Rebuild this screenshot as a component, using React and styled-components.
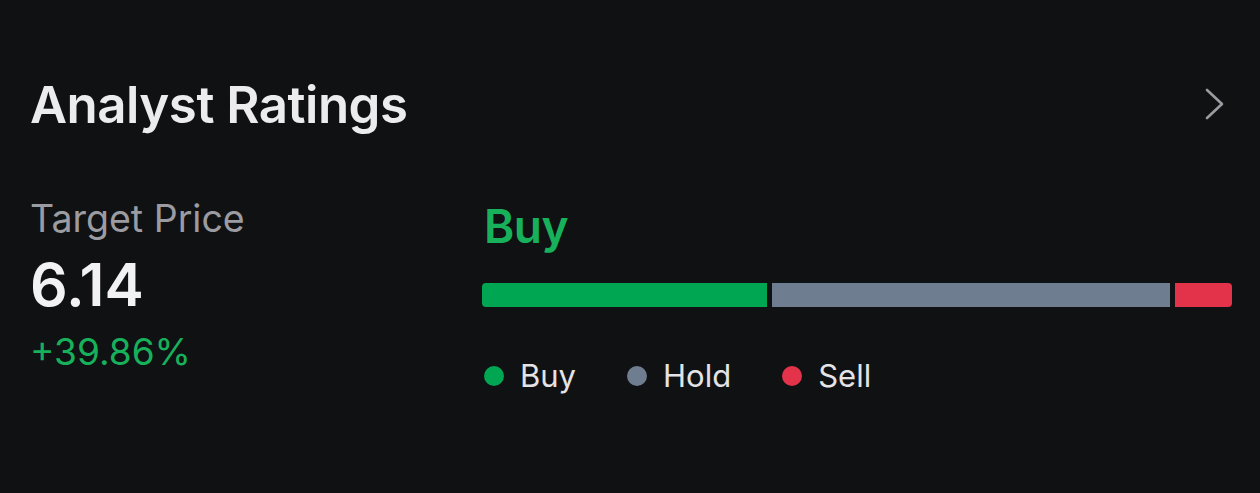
import React from 'react';
import styled, { createGlobalStyle } from 'styled-components';

const GlobalStyle = createGlobalStyle`
  html, body {
    margin: 0;
    padding: 0;
    background: #101113;
  }
  body {
    font-family: Inter, "Noto Sans", sans-serif;
    color: #ececee;
  }
`;

const ratings = [
  { label: 'Buy', value: 285, color: '#00a651' },
  { label: 'Hold', value: 398, color: '#6f7d90' },
  { label: 'Sell', value: 57, color: '#e3334b' },
];

const App = () => (
  <>
    <GlobalStyle />
    <Card>
      <Header>
        <Title>Analyst Ratings</Title>
        <Chevron viewBox="0 0 24 34" aria-hidden="true">
          <path d="M4 3 L19 17 L4 31" />
        </Chevron>
      </Header>
      <Body>
        <PriceColumn>
          <Label>Target Price</Label>
          <Price>6.14</Price>
          <Change>+39.86%</Change>
        </PriceColumn>
        <RatingColumn>
          <Verdict>Buy</Verdict>
          <Bar>
            {ratings.map((r) => (
              <Segment key={r.label} color={r.color} style={{ flexGrow: r.value }} />
            ))}
          </Bar>
          <Legend>
            {ratings.map((r) => (
              <LegendItem key={r.label}>
                <Dot color={r.color} />
                {r.label}
              </LegendItem>
            ))}
          </Legend>
        </RatingColumn>
      </Body>
    </Card>
  </>
);

export default App;

const Card = styled.div`
  height: 493px;
  box-sizing: border-box;
  padding: 74px 28px 0 30px;
  background: #101113;
`;

const Header = styled.div`
  display: flex;
  align-items: center;
  justify-content: space-between;
  height: 60px;
`;

const Title = styled.h2`
  margin: 0;
  font-size: 51px;
  font-weight: 600;
  letter-spacing: -0.5px;
  color: #ececee;
`;

const Chevron = styled.svg`
  width: 24px;
  height: 34px;
  margin-right: 5px;
  fill: none;
  stroke: #9a9ba0;
  stroke-width: 2.6;
  stroke-linecap: round;
  stroke-linejoin: round;
`;

const Body = styled.div`
  display: grid;
  grid-template-columns: 452px 1fr;
  margin-top: 62px;
`;

const PriceColumn = styled.div`
  display: flex;
  flex-direction: column;
`;

const Label = styled.div`
  font-size: 37.5px;
  line-height: 46px;
  color: #9b9ca1;
`;

const Price = styled.div`
  margin-top: 7px;
  font-size: 59px;
  line-height: 72px;
  font-weight: 600;
  color: #f2f2f4;
`;

const Change = styled.div`
  margin-top: 9px;
  font-size: 37px;
  line-height: 44px;
  color: #17b15c;
`;

const RatingColumn = styled.div`
  display: flex;
  flex-direction: column;
`;

const Verdict = styled.div`
  margin-top: 3px;
  padding-left: 2px;
  font-size: 46px;
  line-height: 54px;
  font-weight: 600;
  letter-spacing: -0.5px;
  color: #17b15c;
`;

const Bar = styled.div`
  display: flex;
  gap: 5px;
  height: 24px;
  margin-top: 30px;
`;

const Segment = styled.div`
  flex-basis: 0;
  background: ${(p) => p.color};
  &:first-child {
    border-radius: 4px 0 0 4px;
  }
  &:last-child {
    border-radius: 0 4px 4px 0;
  }
`;

const Legend = styled.div`
  display: flex;
  align-items: center;
  gap: 51px;
  margin-top: 49px;
  padding-left: 2px;
`;

const LegendItem = styled.div`
  display: flex;
  align-items: center;
  gap: 16px;
  font-size: 31px;
  line-height: 40px;
  color: #e4e4e7;
`;

const Dot = styled.span`
  width: 20px;
  height: 20px;
  border-radius: 50%;
  background: ${(p) => p.color};
`;
